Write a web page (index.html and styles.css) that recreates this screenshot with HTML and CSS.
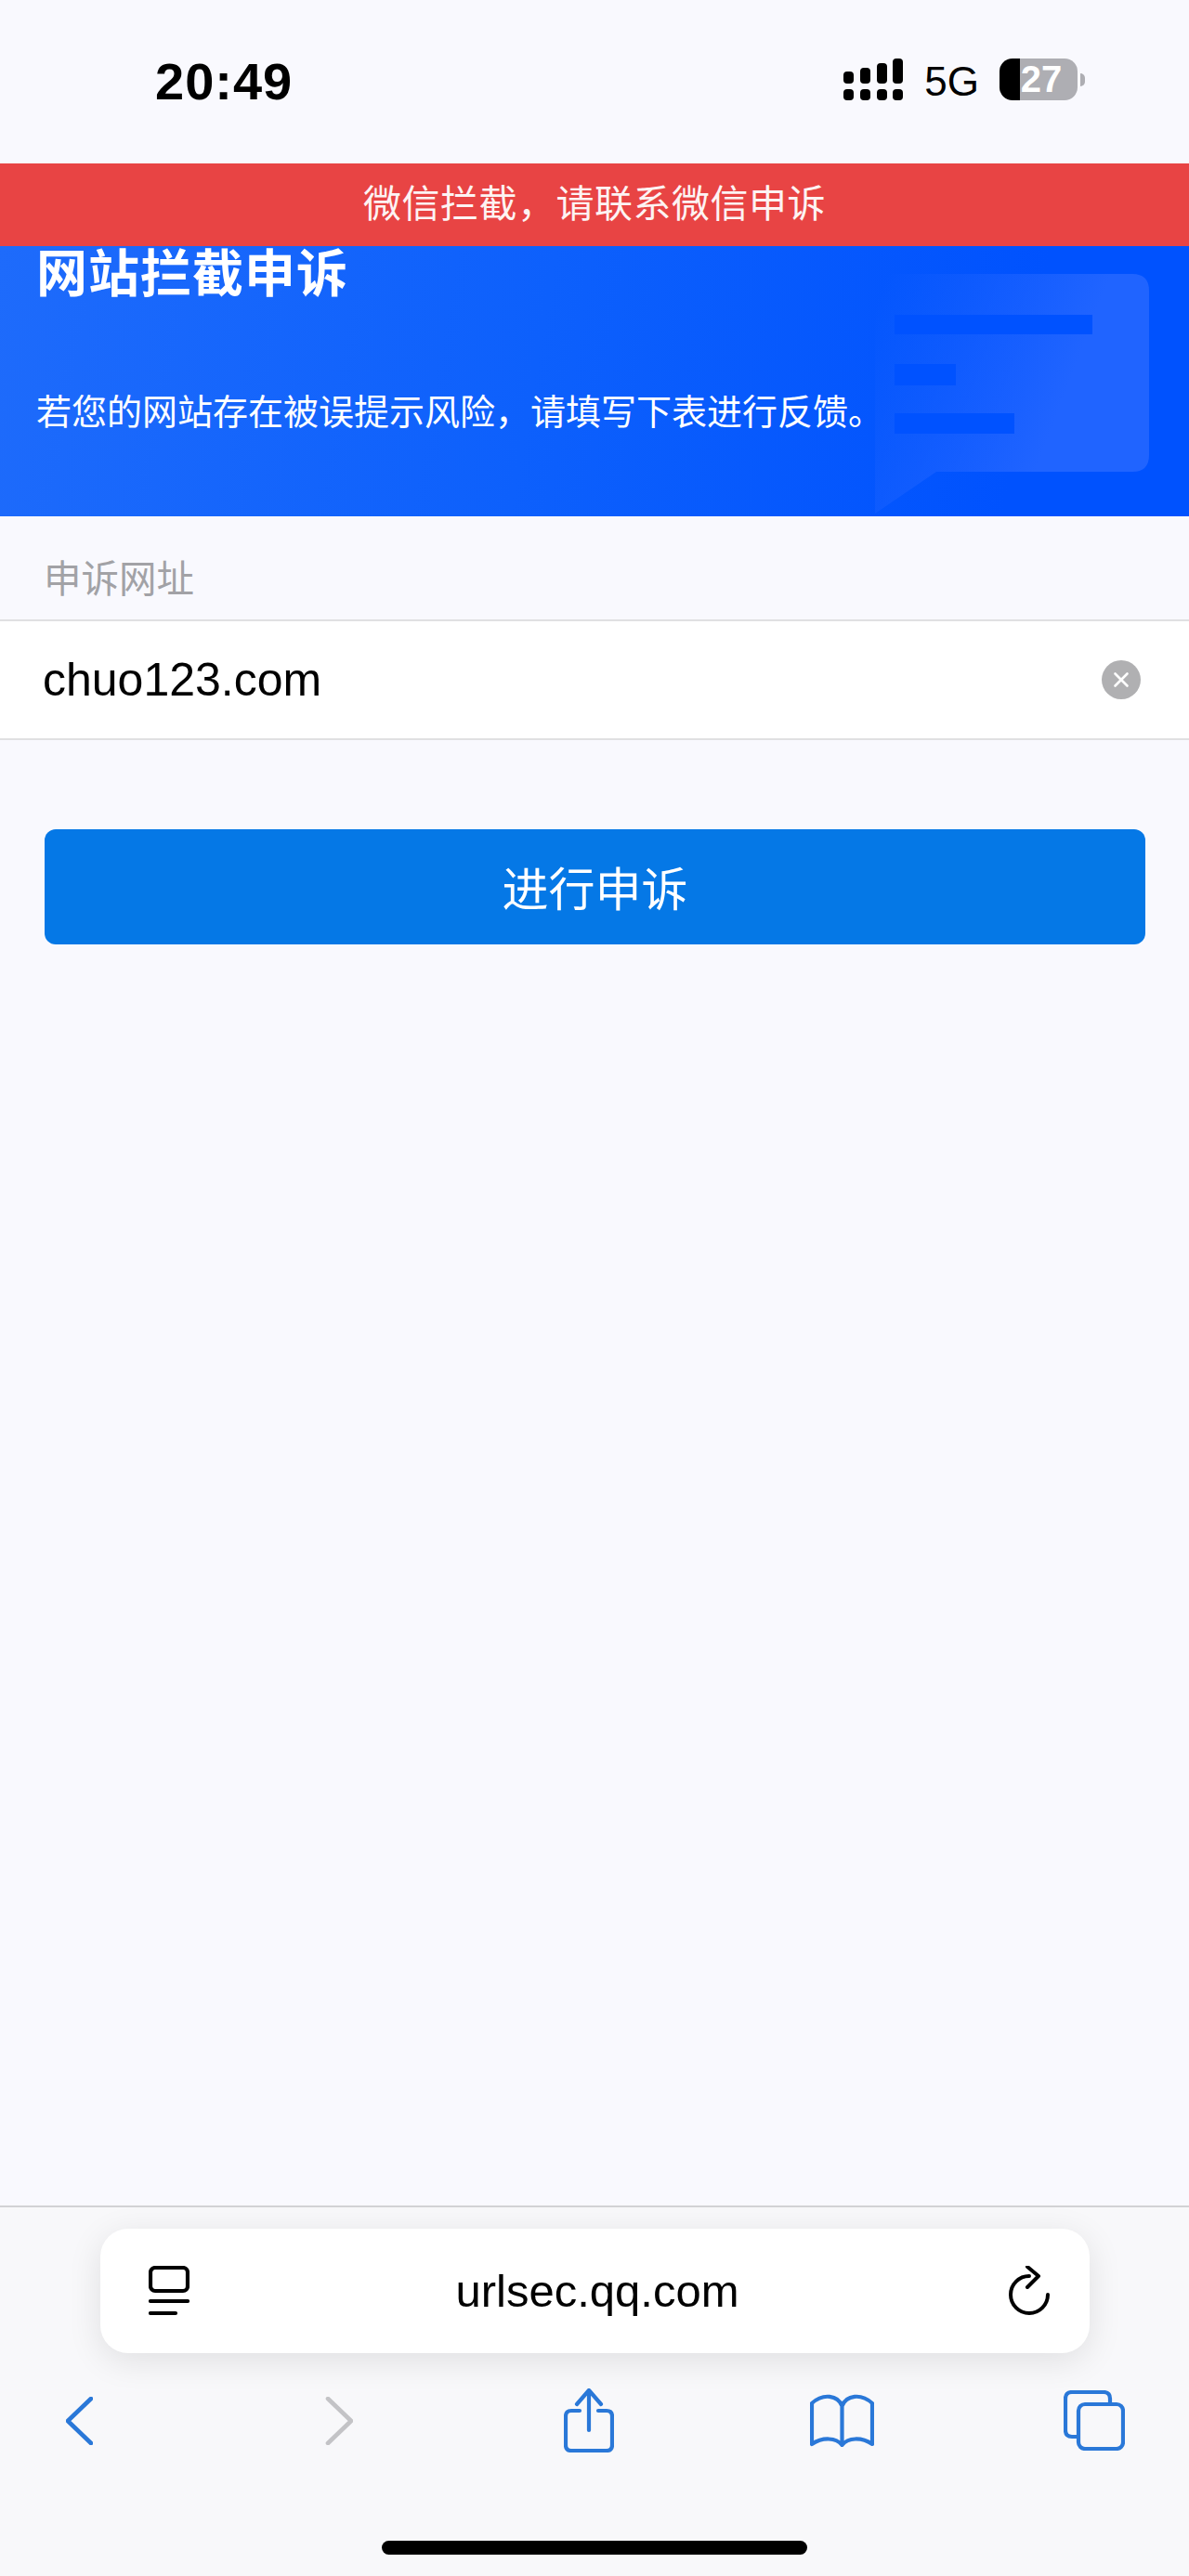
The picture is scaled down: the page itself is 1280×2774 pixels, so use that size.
FILE: index.html

```html
<!DOCTYPE html>
<html lang="zh-CN">
<head>
  <meta charset="UTF-8" />
  <meta name="viewport" content="width=device-width, initial-scale=1" />
  <title>网站拦截申诉</title>
  <link rel="stylesheet" href="styles.css">
</head>
<body>
  <div class="status-bar">
    <div class="time">20:49</div>
    <div class="status-right">
      <svg class="signal" viewBox="0 0 64 45" width="64" height="45">
        <rect x="0" y="14" width="11" height="13" rx="4"/>
        <rect x="18" y="10" width="11" height="17" rx="4"/>
        <rect x="36" y="5" width="11" height="22" rx="4"/>
        <rect x="53" y="0" width="11" height="27" rx="4"/>
        <rect x="0" y="33" width="11" height="12" rx="4"/>
        <rect x="18" y="33" width="11" height="12" rx="4"/>
        <rect x="36" y="33" width="11" height="12" rx="4"/>
        <rect x="53" y="33" width="11" height="12" rx="4"/>
      </svg>
      <span class="network">5G</span>
      <div class="battery"><span>27</span></div>
      <div class="battery-tip"></div>
    </div>
  </div>

  <div class="alert-bar">微信拦截，请联系微信申诉</div>

  <div class="hero">
    <svg class="hero-bubble" viewBox="0 0 298 261" width="298" height="261">
      <defs>
        <linearGradient id="bubble-fade" gradientUnits="userSpaceOnUse" x1="0" y1="40" x2="210" y2="120">
          <stop offset="0" stop-color="#2064ff" stop-opacity="0"/>
          <stop offset="1" stop-color="#2064ff"/>
        </linearGradient>
      </defs>
      <path fill="url(#bubble-fade)" d="M22 0H279Q297 0 297 18V195Q297 213 279 213H68L2 258V20Q2 0 22 0Z"/>
      <rect class="bubble-line" x="23" y="44" width="213" height="21"/>
      <rect class="bubble-line" x="23" y="97" width="66" height="23"/>
      <rect class="bubble-line" x="23" y="150" width="129" height="22"/>
    </svg>
    <h1>网站拦截申诉</h1>
    <p>若您的网站存在被误提示风险，请填写下表进行反馈。</p>
  </div>

  <main class="content">
    <div class="field-label">申诉网址</div>
    <div class="field-row">
      <span class="field-value">chuo123.com</span>
      <svg class="clear-icon" viewBox="0 0 42 42" width="42" height="42">
        <circle cx="21" cy="21" r="21" fill="#b0b0b2"/>
        <path d="M14.5 14.500L27.500 27.500M27.500 14.500L14.500 27.500" stroke="#fff" stroke-width="2.6" stroke-linecap="round"/>
      </svg>
    </div>
    <button class="submit-btn">进行申诉</button>
  </main>

  <div class="toolbar">
    <div class="url-pill">
      <svg viewBox="0 0 44 54" width="44" height="54" fill="none" stroke="#000" stroke-width="4.2" stroke-linecap="round">
        <rect x="2" y="2" width="40" height="25" rx="5"/>
        <path d="M2 38H42M2 51H29"/>
      </svg>
      <span class="url-text">urlsec.qq.com</span>
      <svg viewBox="0 0 44 54" width="44" height="54" fill="none" stroke="#000" stroke-width="4" stroke-linecap="round" stroke-linejoin="round">
        <path d="M22 11A20 20 0 1 0 42 31"/>
        <path d="M20 1L32 11L20 23"/>
      </svg>
    </div>
    <div class="nav-icons">
      <svg viewBox="0 0 29 52" width="29" height="52" fill="none" stroke="#2a78d8" stroke-width="4.6" stroke-linecap="round" stroke-linejoin="round">
        <path d="M27 2L2 26L27 50"/>
      </svg>
      <svg viewBox="0 0 30 52" width="30" height="52" fill="none" stroke="#c3c3c6" stroke-width="4.6" stroke-linecap="round" stroke-linejoin="round">
        <path d="M3 2L28 26L3 50"/>
      </svg>
      <svg viewBox="0 0 54 69" width="54" height="69" fill="none" stroke="#2a78d8" stroke-width="4.2" stroke-linecap="round" stroke-linejoin="round">
        <path d="M17 24H8Q2 24 2 30V61Q2 67 8 67H46Q52 67 52 61V30Q52 24 46 24H37"/>
        <path d="M27 45V3M14 17L27 2L40 17"/>
      </svg>
      <svg viewBox="0 0 69 57" width="69" height="57" fill="none" stroke="#2a78d8" stroke-width="4.2" stroke-linecap="round" stroke-linejoin="round">
        <path d="M34.500 13V55C28 47 14 46 2 54V10C14 -1 30 1 34.500 13C39 1 55 -1 67 10V54C55 46 41 47 34.500 55"/>
      </svg>
      <svg viewBox="0 0 66 65" width="66" height="65" fill="none" stroke="#2a78d8" stroke-width="4.2" stroke-linejoin="round">
        <path d="M14 50H9Q2 50 2 43V9Q2 2 9 2H43Q50 2 50 9V14"/>
        <rect x="16" y="15" width="48" height="48" rx="7"/>
      </svg>
    </div>
    <div class="home-bar"></div>
  </div>
</body>
</html>
```

FILE: styles.css

```css
html, body {
  height: 100%;
}
body {
  margin: 0;
  display: flex;
  flex-direction: column;
  background: #f9f9fe;
  font-family: "Liberation Sans", "Noto Sans CJK SC", sans-serif;
  color: #000;
}

.status-bar {
  height: 176px;
  padding: 0 112px 0 167px;
  box-sizing: border-box;
  display: flex;
  justify-content: space-between;
  align-items: center;
}
.time {
  margin-bottom: 2px;
  font-size: 56px;
  font-weight: 700;
  letter-spacing: 1px;
}
.status-right {
  display: flex;
  align-items: center;
}
.signal {
  margin: 0 23px 5px 0;
  fill: #000;
}
.network {
  font-size: 44px;
  margin-right: 22px;
}
.battery {
  width: 84px;
  height: 45px;
  margin-bottom: 5px;
  border-radius: 14px;
  background: linear-gradient(90deg, #000 26%, #aeaeb3 26%);
  color: #fff;
  font-size: 40px;
  font-weight: 700;
  line-height: 45px;
  text-align: center;
  text-indent: 6px;
}
.battery-tip {
  width: 5px;
  height: 14px;
  margin: 0 0 5px 3px;
  border-radius: 0 5px 5px 0;
  background: #aeaeb3;
}

.alert-bar {
  height: 89px;
  line-height: 88px;
  background: #e84444;
  color: #fdf3f3;
  font-size: 41px;
  letter-spacing: 0.5px;
  text-align: center;
}

.hero {
  position: relative;
  height: 291px;
  padding-left: 39px;
  background: linear-gradient(100deg, #1e6bfb 0%, #0d60fc 45%, #0052fe 85%);
  color: #fff;
  overflow: hidden;
}
.hero h1 {
  position: relative;
  margin: 0;
  font-size: 55px;
  letter-spacing: 1px;
  line-height: 60px;
}
.hero p {
  position: relative;
  margin: 0;
  padding-top: 94px;
  font-size: 38px;
  line-height: 50px;
}
.hero-bubble {
  position: absolute;
  left: 940px;
  top: 30px;
}
.bubble-line {
  fill: #0052ff;
}

.content {
  flex: 1;
}
.field-label {
  height: 111px;
  padding: 18px 0 0 47px;
  box-sizing: border-box;
  display: flex;
  align-items: center;
  font-size: 40.500px;
  color: #a2a2a6;
}
.field-row {
  height: 130px;
  padding: 0 52px 0 46px;
  box-sizing: border-box;
  display: flex;
  justify-content: space-between;
  align-items: center;
  background: #fff;
  border-top: 2px solid #e0e0e2;
  border-bottom: 2px solid #e0e0e2;
}
.field-value {
  font-size: 50px;
}
.submit-btn {
  display: block;
  width: 1185px;
  height: 124px;
  margin: 96px 0 0 48px;
  padding: 0 0 3px;
  border: 0;
  border-radius: 12px;
  background: #0578e6;
  color: #fff;
  font-family: inherit;
  font-size: 50px;
}

.toolbar {
  height: 399px;
  box-sizing: border-box;
  padding-top: 23px;
  background: #f8f8fa;
  border-top: 2px solid #d2d2d5;
}
.url-pill {
  width: 1065px;
  height: 134px;
  margin-left: 108px;
  padding: 0 43px 0 52px;
  box-sizing: border-box;
  display: flex;
  justify-content: space-between;
  align-items: center;
  background: #fff;
  border-radius: 30px;
  box-shadow: 0 8px 36px rgba(0, 0, 0, 0.1);
}
.url-text {
  font-size: 49px;
  margin-right: 4px;
}
.nav-icons {
  display: grid;
  grid-template-columns: 279px 257px 265px 273px 66px;
  align-items: center;
  height: 69px;
  margin-top: 38px;
  padding-left: 71px;
}
.home-bar {
  width: 458px;
  height: 15px;
  margin: 95px auto 0;
  border-radius: 8px;
  background: #000;
}
```
